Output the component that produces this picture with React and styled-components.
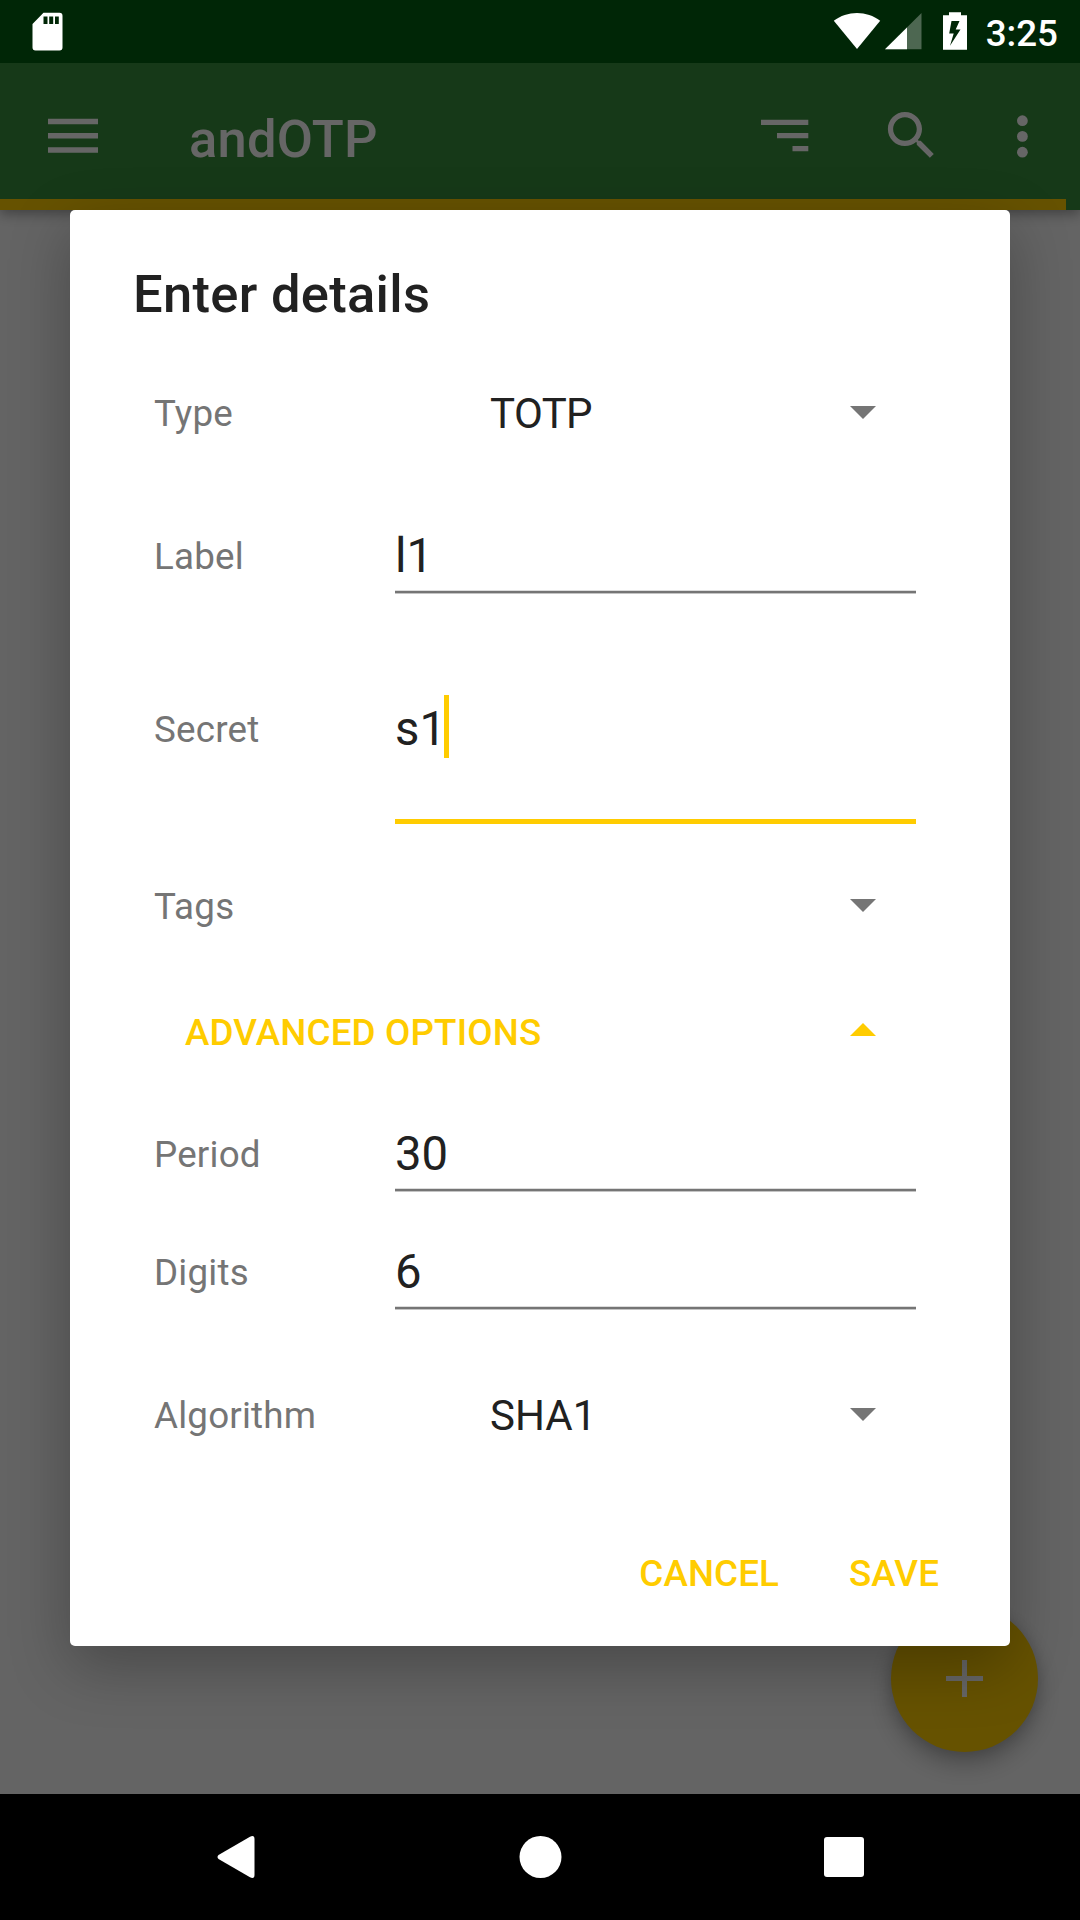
import React from "react";
import styled, { createGlobalStyle } from "styled-components";

const ACCENT = "#ffcc00";

const GlobalStyle = createGlobalStyle`
  * { box-sizing: border-box; }
  body { margin: 0; background: #000; }
  button { border: 0; padding: 0; background: none; font: inherit; color: inherit; letter-spacing: inherit; }
`;

const Screen = styled.div`
  position: relative;
  display: flex;
  flex-direction: column;
  width: 1080px;
  height: 1920px;
  overflow: hidden;
  background: #fafafa;
  font-family: Roboto, "Noto Sans", sans-serif;
  font-size: 36.75px;
  line-height: 1;
  color: #212121;
`;

const StatusBar = styled.header`
  position: relative;
  z-index: 3;
  display: flex;
  align-items: flex-start;
  height: 63px;
  padding: 12px 22px 0 32px;
  background: #002606;
  color: #fff;
`;

const StatusIcons = styled.div`
  display: flex;
  align-items: flex-start;
  margin-left: auto;
`;

const Clock = styled.span`
  margin-left: 18px;
  line-height: 43px;
  font-weight: 500;
`;

const AppBar = styled.div`
  position: relative;
  display: flex;
  flex-direction: column;
  height: 147px;
  background: #388e3c;
  box-shadow: 0 4px 12px rgba(0, 0, 0, 0.35);
`;

const Toolbar = styled.div`
  display: flex;
  align-items: flex-start;
  height: 136px;
  padding: 41px 26px 0 42px;
  color: #fff;
`;

const AppTitle = styled.h1`
  margin: 0 auto 0 84px;
  font-size: 52.5px;
  font-weight: 500;
  line-height: 71px;
  letter-spacing: 0.2px;
`;

const ToolButton = styled.button`
  display: flex;
  margin-left: ${(p) => p.$gap || 0}px;
`;

const Progress = styled.div`
  width: 1066px;
  height: 11px;
  background: ${ACCENT};
`;

const Content = styled.main`
  display: flex;
  flex: 1;
  align-items: flex-end;
  justify-content: flex-end;
  padding: 0 42px 42px 0;
`;

const Fab = styled.button`
  display: flex;
  align-items: center;
  justify-content: center;
  width: 147px;
  height: 147px;
  border-radius: 50%;
  background: ${ACCENT};
  color: #fff;
  box-shadow: 0 12px 24px rgba(0, 0, 0, 0.26), 0 2px 14px rgba(0, 0, 0, 0.12);
`;

const NavBar = styled.nav`
  position: relative;
  z-index: 3;
  display: flex;
  align-items: center;
  justify-content: space-between;
  height: 126px;
  padding: 0 213px 0 214px;
  background: #000;
  color: #fff;
`;

const Scrim = styled.div`
  position: absolute;
  inset: 63px 0 126px;
  z-index: 2;
  display: flex;
  justify-content: center;
  align-items: flex-start;
  padding-top: 147px;
  background: rgba(0, 0, 0, 0.6);
`;

const Dialog = styled.section`
  display: flex;
  flex-direction: column;
  width: 940px;
  height: 1436px;
  border-radius: 5px;
  background: #fff;
  box-shadow: 0 20px 60px rgba(0, 0, 0, 0.28);
`;

const DialogTitle = styled.h2`
  height: 140px;
  margin: 0;
  padding: 50px 63px 0;
  font-size: 52.5px;
  font-weight: 500;
  line-height: 68px;
  letter-spacing: 0.3px;
`;

const Form = styled.div`
  display: flex;
  flex-direction: column;
  padding-left: 84px;
`;

const Row = styled.div`
  display: grid;
  grid-template-columns: 241px 521px;
  align-items: center;
  height: ${(p) => p.$height}px;
`;

const Label = styled.label`
  padding-top: ${(p) => (p.$flush ? 0 : 2)}px;
  color: #757575;
  line-height: 44px;
  letter-spacing: 0.2px;
`;

const Field = styled.div`
  display: flex;
  flex-direction: column;
  height: ${(p) => p.$height || 76}px;
  padding-top: ${(p) => p.$top || 4}px;
  font-size: 47.25px;
`;

const FieldValue = styled.div`
  display: flex;
  align-items: center;
  height: 68px;
  line-height: 68px;
`;

const Caret = styled.i`
  width: 5px;
  height: 63px;
  margin: 0 0 5px -2px;
  background: ${ACCENT};
`;

const Underline = styled.div`
  height: ${(p) => (p.$active ? 5 : 4)}px;
  margin-top: auto;
  background: ${(p) =>
    p.$active
      ? ACCENT
      : "linear-gradient(#dcdcdc 1px, #757575 1px, #757575 3px, #c4c4c4 3px)"};
`;

const Spinner = styled.div`
  display: flex;
  align-items: center;
  justify-content: space-between;
  padding: 0 40px 0 95px;
  font-size: 42px;
  line-height: 50px;
`;

const SpinnerValue = styled.span`
  padding-top: 2px;
  letter-spacing: ${(p) => p.$tracking || 0}px;
`;

const Triangle = styled.svg`
  display: block;
  width: 26px;
  height: 13px;
  margin-bottom: 1px;
  margin-left: auto;
  fill: currentColor;
  color: ${(p) => (p.$up ? ACCENT : "#757575")};
  transform: ${(p) => (p.$up ? "rotate(180deg)" : "none")};
`;

const AdvancedToggle = styled.button`
  display: flex;
  align-items: center;
  width: 762px;
  height: 88px;
  margin-bottom: 19px;
  padding: 2px 40px 0 31px;
  color: ${ACCENT};
  font-weight: 500;
  letter-spacing: 0.15px;

  ${Triangle} { margin-bottom: 7px; }
`;

const Actions = styled.footer`
  display: flex;
  align-items: center;
  justify-content: flex-end;
  gap: 70px;
  height: 147px;
  padding: 4px 71px 0 0;
  color: ${ACCENT};
  font-weight: 500;
  letter-spacing: 0.1px;
`;

const Arrow = ({ up }) => (
  <Triangle viewBox="0 0 26 13" $up={up}>
    <path d="M0 0h26L13 13z" />
  </Triangle>
);

const TextRow = ({ label, value, height }) => (
  <Row $height={height}>
    <Label>{label}</Label>
    <Field>
      <FieldValue>{value}</FieldValue>
      <Underline />
    </Field>
  </Row>
);

const SpinnerRow = ({ label, value, height, tracking }) => (
  <Row $height={height}>
    <Label>{label}</Label>
    <Spinner>
      <SpinnerValue $tracking={tracking}>{value}</SpinnerValue>
      <Arrow />
    </Spinner>
  </Row>
);

const SdCard = () => (
  <svg width="31" height="39" viewBox="0 0 31 39">
    <path
      fill="#fff"
      fillRule="evenodd"
      d="M11.5.8H27.5a3 3 0 0 1 3 3V35.500a3 3 0 0 1-3 3H3.500a3 3 0 0 1-3-3V12zM11.500 4.500v7.500h4V4.500zM17.200 4.500v7.500h4V4.500zM23 4.500v7.500h3.800V4.500z"
    />
  </svg>
);

const StatusGlyphs = () => (
  <svg width="135" height="39" viewBox="833 12 135 39">
    <g fill="#fff">
      <path d="M857 49L833.800 20.800C840.500 15.600 848.500 12.900 857 12.900s16.500 2.700 23.200 7.900z" />
      <path d="M921.500 12.900V49.300H885z" opacity=".3" />
      <path d="M907 27.400V49.300H885z" />
      <path
        fillRule="evenodd"
        d="M949 12.300h12v3h6v34.500h-24V15.300h6zM951.500 21L949.200 33.500h4.500L950 45.800 960.500 29.500h-4.800L959.500 21z"
      />
    </g>
  </svg>
);

export default function App() {
  return (
    <>
      <GlobalStyle />
      <Screen>
        <StatusBar>
          <SdCard />
          <StatusIcons>
            <StatusGlyphs />
            <Clock>3:25</Clock>
          </StatusIcons>
        </StatusBar>

        <AppBar>
          <Toolbar>
            <ToolButton aria-label="Menu">
              <svg width="63" height="63" viewBox="0 0 63 63" fill="currentColor">
                <path d="M6 14.700h50v5.500H6zM6 29h50v5.500H6zM6 43.200h50v5.500H6z" />
              </svg>
            </ToolButton>
            <AppTitle>andOTP</AppTitle>
            <ToolButton aria-label="Sort">
              <svg width="63" height="63" viewBox="0 0 63 63" fill="currentColor">
                <path d="M8 15.800h47.300V21H8zM24 29h31.300v5.200H24zM39.500 42h15.800v5.200H39.500z" />
              </svg>
            </ToolButton>
            <ToolButton $gap={64} aria-label="Search">
              <svg width="63" height="63" viewBox="0 0 24 24" fill="currentColor">
                <path d="M15.500 14h-.79l-.28-.27C15.410 12.590 16 11.110 16 9.500 16 5.910 13.090 3 9.500 3S3 5.910 3 9.500 5.910 16 9.500 16c1.610 0 3.090-.59 4.230-1.570l.27.28v.79l5 4.990L20.490 19l-4.990-5zm-6 0C7.010 14 5 11.990 5 9.500S7.010 5 9.500 5 14 7.010 14 9.500 11.990 14 9.500 14z" />
              </svg>
            </ToolButton>
            <ToolButton $gap={48} aria-label="More options">
              <svg width="63" height="63" viewBox="0 0 63 63" fill="currentColor">
                <circle cx="31.400" cy="16.700" r="5.400" />
                <circle cx="31.400" cy="32.400" r="5.400" />
                <circle cx="31.400" cy="48.200" r="5.400" />
              </svg>
            </ToolButton>
          </Toolbar>
          <Progress />
        </AppBar>

        <Content>
          <Fab aria-label="Add">
            <svg width="37" height="37" viewBox="0 0 37 37" fill="currentColor">
              <path d="M16 0h5v16h16v5H21v16h-5V21H0v-5h16z" />
            </svg>
          </Fab>
        </Content>

        <Scrim>
          <Dialog role="dialog">
            <DialogTitle>Enter details</DialogTitle>
            <Form>
              <SpinnerRow label="Type" value="TOTP" height={126} tracking={-0.6} />
              <TextRow label="Label" value="l1" height={160} />
              <Row $height={188}>
                <Label $flush>Secret</Label>
                <Field $height={188} $top={59}>
                  <FieldValue>
                    s1
                    <Caret />
                  </FieldValue>
                  <Underline $active />
                </Field>
              </Row>
              <SpinnerRow label="Tags" value="" height={164} />
              <AdvancedToggle>
                ADVANCED OPTIONS
                <Arrow up />
              </AdvancedToggle>
              <TextRow label="Period" value="30" height={118} />
              <TextRow label="Digits" value="6" height={118} />
              <SpinnerRow label="Algorithm" value="SHA1" height={168} />
            </Form>
            <Actions>
              <button>CANCEL</button>
              <button>SAVE</button>
            </Actions>
          </Dialog>
        </Scrim>

        <NavBar>
          <svg width="44" height="44" viewBox="0 0 44 44" fill="currentColor">
            <path d="M4.500 20L36 1.700Q40.500-.2 40.500 4V40Q40.500 44.200 36 42.300L4.500 24Q2.500 22 4.500 20z" />
          </svg>
          <svg width="44" height="44" viewBox="0 0 44 44" fill="currentColor">
            <circle cx="21.500" cy="22" r="21" />
          </svg>
          <svg width="44" height="44" viewBox="0 0 44 44" fill="currentColor">
            <rect x="1" y="2" width="40" height="40" rx="3" />
          </svg>
        </NavBar>
      </Screen>
    </>
  );
}
